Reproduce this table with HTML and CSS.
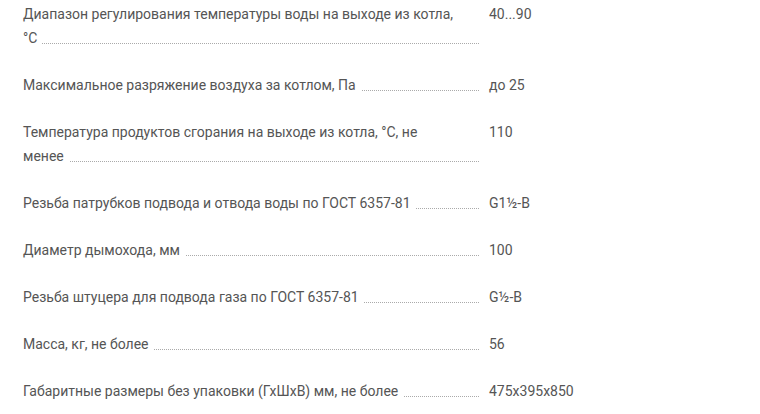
FILE: index.html
```html
<!DOCTYPE html>
<html lang="ru">
<head>
<meta charset="utf-8">
<link rel="stylesheet" href="styles.css">
</head>
<body>
<div class="specs">
  <div class="row"><div class="label"><span>Диапазон регулирования температуры воды на выходе из котла, °С</span></div><div class="value">40...90</div></div>
  <div class="row"><div class="label"><span>Максимальное разряжение воздуха за котлом, Па</span></div><div class="value">до 25</div></div>
  <div class="row"><div class="label"><span>Температура продуктов сгорания на выходе из котла, °С, не менее</span></div><div class="value">110</div></div>
  <div class="row"><div class="label"><span>Резьба патрубков подвода и отвода воды по ГОСТ 6357-81</span></div><div class="value">G1½-B</div></div>
  <div class="row"><div class="label"><span>Диаметр дымохода, мм</span></div><div class="value">100</div></div>
  <div class="row"><div class="label"><span>Резьба штуцера для подвода газа по ГОСТ 6357-81</span></div><div class="value">G½-B</div></div>
  <div class="row"><div class="label"><span>Масса, кг, не более</span></div><div class="value">56</div></div>
  <div class="row"><div class="label"><span>Габаритные размеры без упаковки (ГхШхВ) мм, не более</span></div><div class="value">475x395x850</div></div>
</div>
</body>
</html>
```
FILE: styles.css
```css
html, body {
  margin: 0;
  background: #fff;
}
.specs {
  padding: 2px 0 0 23px;
  font-family: Roboto, "Liberation Sans", sans-serif;
  font-size: 14px;
  line-height: 24px;
  color: #555;
}
.row {
  display: flex;
  margin-bottom: 23px;
}
.label {
  position: relative;
  width: 436px;
  padding-right: 20px;
  margin-right: 10px;
}
.label::after {
  content: "";
  position: absolute;
  left: 0;
  right: 0;
  bottom: 6px;
  border-bottom: 1px dotted #aaa;
}
.label span {
  position: relative;
  z-index: 1;
  background: #fff;
  padding-right: 5px;
}
.value {
  flex: 1;
}
```
